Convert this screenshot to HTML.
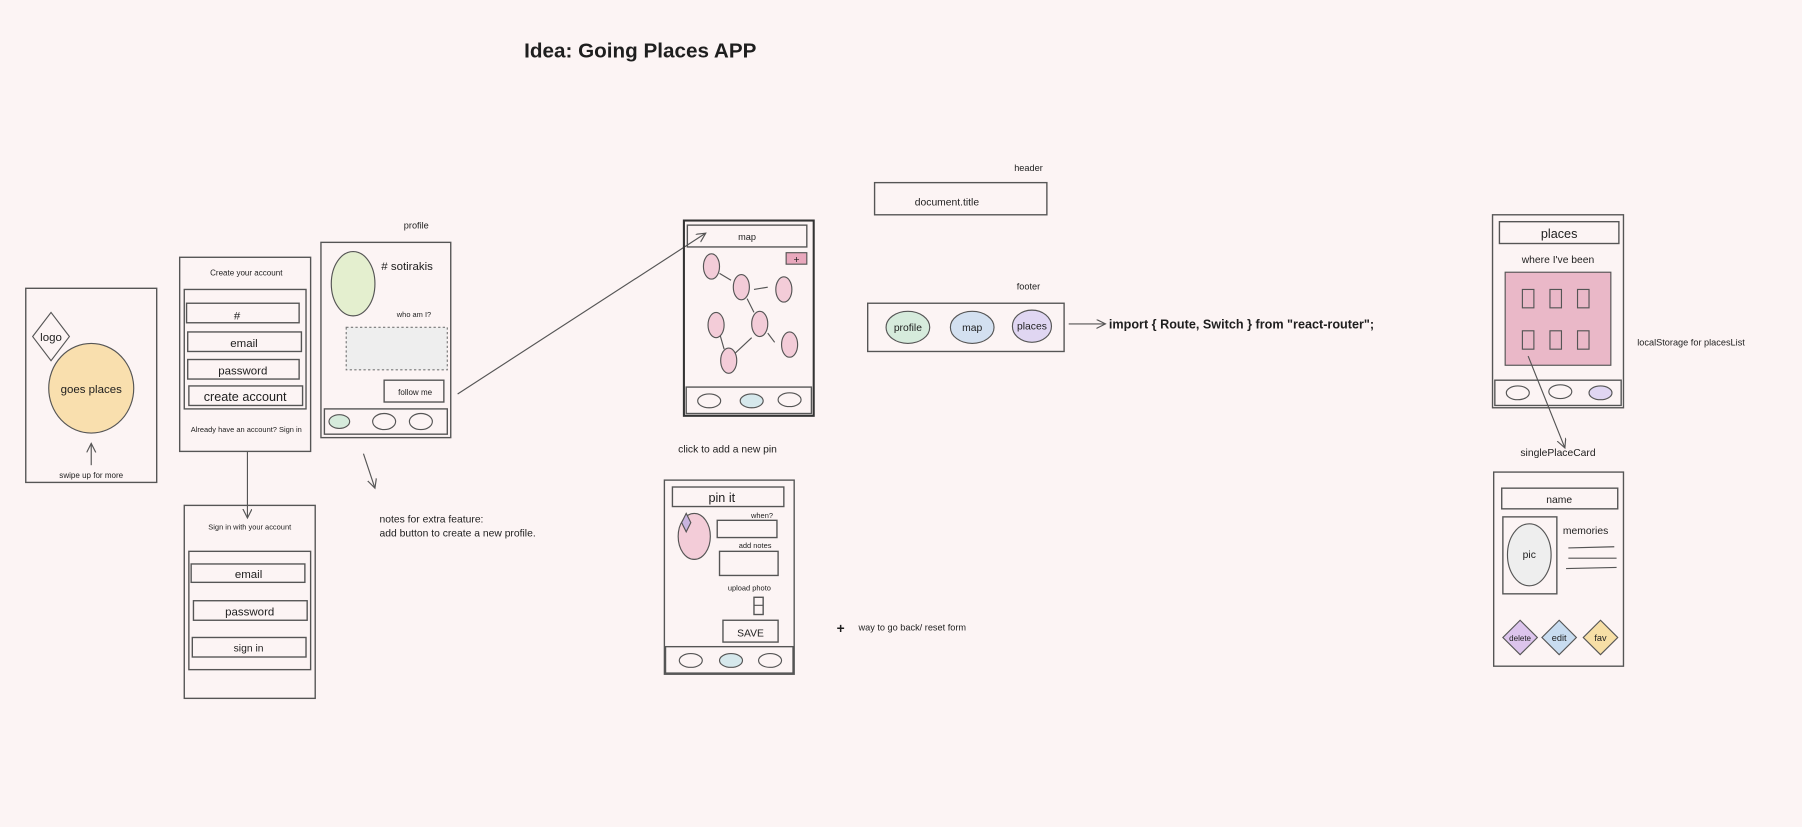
<!DOCTYPE html>
<html><head><meta charset="utf-8"><style>
html,body{margin:0;padding:0;background:#fcf4f4;width:1802px;height:827px;overflow:hidden}
svg{display:block}
text{font-family:"Liberation Sans","DejaVu Sans",sans-serif;fill:#1e1e1e;text-anchor:middle}
.r{fill:none;stroke:#555;stroke-width:1.2}
.l{stroke:#555;stroke-width:1;fill:none}
.pk{fill:#f3ccd8;stroke:#555;stroke-width:1}
</style></head><body>
<svg width="1802" height="827" viewBox="0 0 1568 720" xmlns="http://www.w3.org/2000/svg">
<defs><marker id="a" markerWidth="10" markerHeight="10" refX="8" refY="4" orient="auto"><path d="M0,0 L8,4 L0,8" fill="none" stroke="#555" stroke-width="1"/></marker></defs>
<text x="557" y="50" font-size="18" font-weight="bold">Idea: Going Places APP</text>

<rect class="r" x="22" y="251" width="114" height="169"/>
<path class="l" d="M44,272 L60,293 L44,314 L28,293 Z"/>
<text x="44" y="297" font-size="10">logo</text>
<ellipse cx="79" cy="338" rx="37" ry="39" fill="#f9dfae" stroke="#555"/>
<text x="79" y="342" font-size="10">goes places</text>
<line class="l" x1="79" y1="405" x2="79" y2="386" marker-end="url(#a)"/>
<text x="79" y="416" font-size="7">swipe up for more</text>

<rect class="r" x="156" y="224" width="114" height="169"/>
<text x="214" y="240" font-size="7">Create your account</text>
<rect class="r" x="160" y="252" width="106" height="104"/>
<rect class="r" x="162" y="264" width="98" height="17"/><text x="206" y="278" font-size="10">#</text>
<rect class="r" x="163" y="289" width="99" height="17"/><text x="212" y="302" font-size="10">email</text>
<rect class="r" x="163" y="313" width="97" height="17"/><text x="211" y="326" font-size="10">password</text>
<rect class="r" x="164" y="336" width="99" height="17" fill="#d6e8ec"/><text x="213" y="349" font-size="11">create account</text>
<text x="214" y="376" font-size="6.5">Already have an account? Sign in</text>
<line class="l" x1="215" y1="393" x2="215" y2="451" marker-end="url(#a)"/>

<text x="362" y="199" font-size="8">profile</text>
<rect class="r" x="279" y="211" width="113" height="170"/>
<ellipse cx="307" cy="247" rx="19" ry="28" fill="#e4efcf" stroke="#555"/>
<text x="354" y="235" font-size="10">#  sotirakis</text>
<text x="360" y="276" font-size="6.5">who am I?</text>
<rect x="301" y="285" width="88" height="37" fill="#eeeeee" stroke="#777" stroke-dasharray="2,2"/>
<rect class="r" x="334" y="331" width="52" height="19" fill="#d6e8ec"/><text x="361" y="344" font-size="7">follow me</text>
<rect class="r" x="282" y="356" width="107" height="22"/>
<ellipse cx="295" cy="367" rx="9" ry="6" fill="#d6ebdc" stroke="#555"/>
<ellipse cx="334" cy="367" rx="10" ry="7" fill="none" stroke="#555"/>
<ellipse cx="366" cy="367" rx="10" ry="7" fill="none" stroke="#555"/>
<line class="l" x1="398" y1="343" x2="614" y2="203" marker-end="url(#a)"/>
<line class="l" x1="316" y1="395" x2="326" y2="425" marker-end="url(#a)"/>
<text x="330" y="455" font-size="9" style="text-anchor:start">notes for extra feature:</text>
<text x="330" y="467" font-size="9" style="text-anchor:start">add button to create a new profile.</text>

<rect class="r" x="160" y="440" width="114" height="168"/>
<text x="217" y="461" font-size="6.5">Sign in with your account</text>
<rect class="r" x="164" y="480" width="106" height="103"/>
<rect class="r" x="166" y="491" width="99" height="16"/><text x="216" y="503" font-size="10">email</text>
<rect class="r" x="168" y="523" width="99" height="17"/><text x="217" y="536" font-size="10">password</text>
<rect class="r" x="167" y="555" width="99" height="17" fill="#d6e8ec"/><text x="216" y="567" font-size="9">sign in</text>

<rect x="595" y="192" width="113" height="170" fill="none" stroke="#333" stroke-width="1.8"/>
<rect class="r" x="598" y="196" width="104" height="19"/><text x="650" y="209" font-size="8">map</text>
<rect x="684" y="220" width="18" height="10" fill="#e9a8bd" stroke="#555"/><text x="693" y="229" font-size="9">+</text>
<path class="l" d="M626,238 L636,244 M656,252 L668,250 M650,260 L656,272 M626,290 L630,304 M639,308 L654,294 M668,290 L674,298"/>
<ellipse class="pk" cx="619" cy="232" rx="7" ry="11"/>
<ellipse class="pk" cx="645" cy="250" rx="7" ry="11"/>
<ellipse class="pk" cx="682" cy="252" rx="7" ry="11"/>
<ellipse class="pk" cx="623" cy="283" rx="7" ry="11"/>
<ellipse class="pk" cx="661" cy="282" rx="7" ry="11"/>
<ellipse class="pk" cx="687" cy="300" rx="7" ry="11"/>
<ellipse class="pk" cx="634" cy="314" rx="7" ry="11"/>
<rect class="r" x="597" y="337" width="109" height="23"/>
<ellipse cx="617" cy="349" rx="10" ry="6" fill="none" stroke="#555"/>
<ellipse cx="654" cy="349" rx="10" ry="6" fill="#d6e8ec" stroke="#555"/>
<ellipse cx="687" cy="348" rx="10" ry="6" fill="none" stroke="#555"/>
<text x="633" y="394" font-size="9">click to add a new pin</text>

<rect class="r" x="578" y="418" width="113" height="169"/>
<rect class="r" x="585" y="424" width="97" height="17"/><text x="628" y="437" font-size="11">pin it</text>
<ellipse class="pk" cx="604" cy="467" rx="14" ry="20"/>
<path d="M597,447 L601,455 L597,463 L593,455 Z" fill="#c8b4e0" stroke="#555"/>
<text x="663" y="451" font-size="6.5">when?</text>
<rect class="r" x="624" y="453" width="52" height="15"/>
<text x="657" y="477" font-size="6.5">add notes</text>
<rect class="r" x="626" y="480" width="51" height="21"/>
<text x="652" y="514" font-size="6.5">upload photo</text>
<rect class="r" x="656" y="520" width="8" height="15"/><line class="l" x1="656" y1="527" x2="664" y2="527"/>
<rect class="r" x="629" y="540" width="48" height="19"/><text x="653" y="554" font-size="9">SAVE</text>
<rect class="r" x="579" y="563" width="111" height="23"/>
<ellipse cx="601" cy="575" rx="10" ry="6" fill="none" stroke="#555"/>
<ellipse cx="636" cy="575" rx="10" ry="6" fill="#d6e8ec" stroke="#555"/>
<ellipse cx="670" cy="575" rx="10" ry="6" fill="none" stroke="#555"/>
<text x="728" y="551" font-size="12" font-weight="bold" style="text-anchor:start">+</text>
<text x="747" y="549" font-size="8" style="text-anchor:start">way to go back/ reset form</text>

<text x="895" y="149" font-size="8">header</text>
<rect class="r" x="761" y="159" width="150" height="28"/><text x="824" y="179" font-size="9">document.title</text>
<text x="895" y="252" font-size="8">footer</text>
<rect class="r" x="755" y="264" width="171" height="42"/>
<ellipse cx="790" cy="285" rx="19" ry="14" fill="#d6ebdc" stroke="#555"/><text x="790" y="288" font-size="9">profile</text>
<ellipse cx="846" cy="285" rx="19" ry="14" fill="#d3e0f0" stroke="#555"/><text x="846" y="288" font-size="9">map</text>
<ellipse cx="898" cy="284" rx="17" ry="14" fill="#e0d6f2" stroke="#555"/><text x="898" y="287" font-size="9">places</text>
<line class="l" x1="930" y1="282" x2="962" y2="282" marker-end="url(#a)"/>
<text x="965" y="286" font-size="11" font-weight="bold" style="text-anchor:start">import { Route, Switch } from "react-router";</text>

<rect class="r" x="1299" y="187" width="114" height="168"/>
<rect class="r" x="1305" y="193" width="104" height="19"/><text x="1357" y="207" font-size="11">places</text>
<text x="1356" y="229" font-size="9">where I've been</text>
<rect x="1310" y="237" width="92" height="81" fill="#eab8c8" stroke="#555"/>
<rect x="1325" y="252" width="10" height="16" class="l"/><rect x="1349" y="252" width="10" height="16" class="l"/><rect x="1373" y="252" width="10" height="16" class="l"/><rect x="1325" y="288" width="10" height="16" class="l"/><rect x="1349" y="288" width="10" height="16" class="l"/><rect x="1373" y="288" width="10" height="16" class="l"/>
<rect class="r" x="1301" y="331" width="110" height="22"/>
<ellipse cx="1321" cy="342" rx="10" ry="6" fill="none" stroke="#555"/>
<ellipse cx="1358" cy="341" rx="10" ry="6" fill="none" stroke="#555"/>
<ellipse cx="1393" cy="342" rx="10" ry="6" fill="#e0d6f2" stroke="#555"/>
<text x="1425" y="301" font-size="8" style="text-anchor:start">localStorage for placesList</text>
<line class="l" x1="1330" y1="310" x2="1362" y2="390" marker-end="url(#a)"/>
<text x="1356" y="397" font-size="9">singlePlaceCard</text>
<rect class="r" x="1300" y="411" width="113" height="169"/>
<rect class="r" x="1307" y="425" width="101" height="18"/><text x="1357" y="438" font-size="9">name</text>
<rect class="r" x="1308" y="450" width="47" height="67"/>
<ellipse cx="1331" cy="483" rx="19" ry="27" fill="#eeeeee" stroke="#555"/><text x="1331" y="486" font-size="9">pic</text>
<text x="1380" y="465" font-size="9">memories</text>
<path class="l" d="M1365,477 L1405,476 M1365,486 L1407,486 M1363,495 L1407,494"/>
<path d="M1323,540 L1338,555 L1323,570 L1308,555 Z" fill="#dcc4ec" stroke="#555"/><text x="1323" y="558" font-size="7">delete</text>
<path d="M1357,540 L1372,555 L1357,570 L1342,555 Z" fill="#c8dcf0" stroke="#555"/><text x="1357" y="558" font-size="8">edit</text>
<path d="M1393,540 L1408,555 L1393,570 L1378,555 Z" fill="#f7dfa6" stroke="#555"/><text x="1393" y="558" font-size="8">fav</text>
</svg>
</body></html>
